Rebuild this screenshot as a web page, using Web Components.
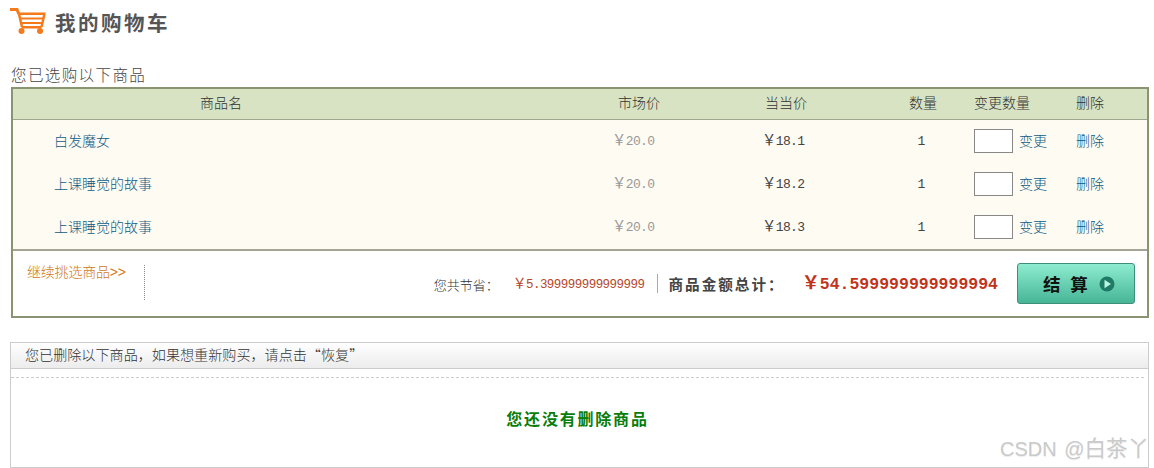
<!DOCTYPE html>
<html lang="zh-CN"><head><meta charset="utf-8">
<style>
html,body{margin:0;padding:0;background:#fff;}
body{width:1154px;height:468px;overflow:hidden;position:relative;font-family:"Liberation Sans","Noto Sans CJK SC",sans-serif;color:#333;}
cart-page{display:block;}
</style></head><body>
<template id="t-page"><style>
:host{display:flex;flex-direction:column;padding:8px 5px 0 10px;}
.sub{font-size:15.500px;letter-spacing:1.400px;line-height:20px;margin:32px 0 1px 1px;color:#444;font-weight:300;}
</style>
<cart-title></cart-title>
<div class="sub">您已选购以下商品</div>
<cart-table></cart-table>
<deleted-box></deleted-box>
<water-mark></water-mark></template>

<template id="t-title"><style>
:host{display:flex;align-items:center;gap:9px;height:26px;}
span{font-size:20.500px;font-weight:700;letter-spacing:2.500px;color:#555;line-height:26px;margin-top:6px}
svg{display:block}
</style>
<svg width="36" height="26" viewBox="0 0 36 26"><path d="M0 1.500H7L8.800 6" fill="none" stroke="#f47a1c" stroke-width="3"/><path d="M8 4.500H36L34.500 7H9zM9.500 9.500H34V11.500H10zM11 14H33V16H11.500zM11 18H32L31.300 20.500H12z" fill="#f47a1c"/><path d="M9 6L12 19M34.500 6L31.500 19" stroke="#f47a1c" stroke-width="2.500" fill="none"/><circle cx="11.500" cy="23" r="3" fill="#f47a1c"/><circle cx="30" cy="23" r="3" fill="#f47a1c"/></svg>
<span>我的购物车</span></template>

<template id="t-table"><style>
:host{display:block;width:1134px;margin-left:1px;border:2px solid #8a9470;}
.head{display:grid;grid-template-columns:var(--c);height:31px;line-height:29px;background:#d7e3c3;border-bottom:1px solid #a0a58f;box-sizing:border-box;font-size:14px;color:#333;font-weight:300;}
.head>*{text-align:center}
.head>.n{text-align:left;padding-left:187px}
.head>.l{text-align:left}
.rows{display:block;background:#fefbf3;height:129px;}
.foot{display:flex;border-top:2px solid #a5a596;height:67px;box-sizing:border-box;background:#fff;}
.more{width:118px;box-sizing:border-box;margin:14px 0 0 14px;height:35px;border-right:1px dotted #888;font-size:14px;line-height:14px;letter-spacing:-.2px;color:#d07a20;font-weight:300;}
.sum{flex:1;display:flex;align-items:center;justify-content:flex-end;padding:0 12px 0 0;}
.sl{font-size:13px;color:#333;font-weight:300;margin-right:14px;padding-top:2px}
.sv{font-family:"Liberation Mono","Noto Sans CJK SC",monospace;font-size:12.500px;letter-spacing:-.53px;color:#b5472a;padding:4px 13px 0 0;border-right:1px solid #aaa;line-height:15px;margin-right:10px}
.tl{font-size:14.600px;letter-spacing:2px;font-weight:700;color:#444;margin-right:17px}
.tv{font-family:"Liberation Mono","Noto Sans CJK SC",monospace;font-size:16.500px;font-weight:700;color:#c1341a;margin-right:19px;padding-top:2px}
</style>
<div class="head"><span class="n">商品名</span><span>市场价</span><span>当当价</span><span>数量</span><span class="l">变更数量</span><span class="l">删除</span></div>
<div class="rows">
<cart-row name="白发魔女" price="18.1"></cart-row>
<cart-row name="上课睡觉的故事" price="18.2"></cart-row>
<cart-row name="上课睡觉的故事" price="18.3"></cart-row>
</div>
<div class="foot"><div class="more">继续挑选商品&gt;&gt;</div>
<div class="sum"><span class="sl">您共节省：</span><span class="sv"><yen-sign></yen-sign>5.399999999999999</span><span class="tl">商品金额总计：</span><span class="tv"><yen-sign></yen-sign>54.599999999999994</span><pay-button></pay-button></div></div></template>

<template id="t-yen"><style>:host{display:inline;font-size:1.100em;line-height:0;font-family:"Noto Sans CJK SC",sans-serif;}</style>￥</template>

<template id="t-row"><style>
:host{display:grid;grid-template-columns:var(--c);height:43px;box-sizing:border-box;padding-bottom:1px;align-items:center;font-size:14px;}
.name,.ch span,.d{padding-bottom:2px;font-weight:300;color:#0f5a82;}
.name{padding-left:41px;}
.c{font-family:"Liberation Mono","Noto Sans CJK SC",monospace;font-size:13px;letter-spacing:-.6px;line-height:16px;padding-top:1px}
.m{color:#999;padding-left:34px}.p{color:#444;padding-left:62px}.q{color:#444;text-align:center;padding-right:4px}
.ch{display:flex;align-items:center;gap:6px;}
input{width:39px;height:24px;box-sizing:border-box;padding:0;margin:0;border:1px solid #888;background:#fff;display:block}
</style>
<div class="name"></div><div class="c m"><yen-sign></yen-sign>20.0</div><div class="c p"><yen-sign></yen-sign><span class="v"></span></div><div class="c q">1</div>
<div class="ch"><input type="text"><span>变更</span></div><div class="d">删除</div></template>

<template id="t-pay"><style>
:host{display:flex;align-items:center;box-sizing:border-box;width:118px;height:41px;border:1px solid #3d8f7a;border-radius:3px;background:linear-gradient(#8eecd0,#46b596);padding-left:25px;}
span{font-size:17.500px;font-weight:700;color:#111;word-spacing:5px;white-space:pre}
svg{margin-left:11px;display:block}
</style><span>结 算</span><svg width="16" height="16" viewBox="0 0 16 16"><circle cx="8" cy="8" r="7.500" fill="#1f7a66"/><path d="M5.500 3.800L12 8L5.500 12.200z" fill="#b8f5e0"/></svg></template>

<template id="t-del"><style>
:host{display:block;box-sizing:border-box;width:1139px;height:126px;margin-top:24px;border:1px solid #ccc;}
.h{height:26px;box-sizing:border-box;border-bottom:1px solid #ccc;background:linear-gradient(#fff,#ececec);padding-left:14px;font-family:"Noto Sans CJK SC",sans-serif;font-size:14.100px;line-height:23px;color:#333;font-weight:300;}
.b{margin:8px 4px 0 0;border-top:1px dashed #ccc;text-align:center;font-size:16px;letter-spacing:1.800px;font-weight:700;color:#0a7d0a;padding-top:31px;line-height:22px;}
</style><div class="h">您已删除以下商品，如果想重新购买，请点击“恢复”</div><div class="b">您还没有删除商品</div></template>

<template id="t-wm"><style>
:host{position:absolute;left:1000px;top:437px;font-size:20px;line-height:24px;color:#cacaca;text-shadow:0 1px 0 #eee;white-space:nowrap;word-spacing:2px}
span{font-size:21.500px}
</style>CSDN @<span>白茶丫</span></template>

<script>
function def(tag,id,init){customElements.define(tag,class extends HTMLElement{constructor(){super();const r=this.attachShadow({mode:'open'});r.appendChild(document.getElementById(id).content.cloneNode(true));}connectedCallback(){if(init)init.call(this,this.shadowRoot);}});}
def('yen-sign','t-yen');
def('cart-title','t-title');
def('cart-table','t-table',function(){this.style.setProperty('--c','565px 122px 172px 102px 102px 71px');});
def('cart-row','t-row',function(r){r.querySelector('.name').textContent=this.getAttribute('name');r.querySelector('.v').textContent=this.getAttribute('price');});
def('pay-button','t-pay');
def('deleted-box','t-del');
def('water-mark','t-wm');
def('cart-page','t-page');
</script>
<cart-page></cart-page>
</body></html>
